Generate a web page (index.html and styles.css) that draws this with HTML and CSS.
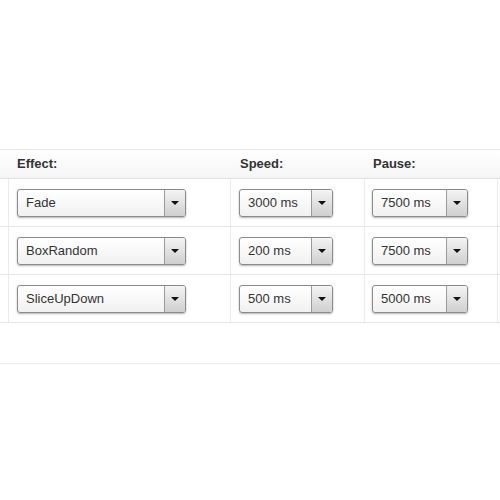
FILE: index.html
```html
<!DOCTYPE html>
<html>
<head>
<meta charset="utf-8">
<link rel="stylesheet" href="styles.css">
</head>
<body>
<div class="table">
  <div class="row head">
    <div class="cell"></div>
    <div class="cell"><span class="hd hd-effect">Effect:</span></div>
    <div class="cell"><span class="hd">Speed:</span></div>
    <div class="cell"><span class="hd">Pause:</span></div>
    <div class="cell"></div>
  </div>
  <div class="row">
    <div class="cell"></div>
    <div class="cell"><div class="sel sel-effect"><span class="val">Fade</span><span class="btn"><i class="tri"></i></span></div></div>
    <div class="cell"><div class="sel sel-speed"><span class="val">3000 ms</span><span class="btn"><i class="tri"></i></span></div></div>
    <div class="cell"><div class="sel sel-pause"><span class="val">7500 ms</span><span class="btn"><i class="tri"></i></span></div></div>
    <div class="cell"></div>
  </div>
  <div class="row">
    <div class="cell"></div>
    <div class="cell"><div class="sel sel-effect"><span class="val">BoxRandom</span><span class="btn"><i class="tri"></i></span></div></div>
    <div class="cell"><div class="sel sel-speed"><span class="val">200 ms</span><span class="btn"><i class="tri"></i></span></div></div>
    <div class="cell"><div class="sel sel-pause"><span class="val">7500 ms</span><span class="btn"><i class="tri"></i></span></div></div>
    <div class="cell"></div>
  </div>
  <div class="row">
    <div class="cell"></div>
    <div class="cell"><div class="sel sel-effect"><span class="val">SliceUpDown</span><span class="btn"><i class="tri"></i></span></div></div>
    <div class="cell"><div class="sel sel-speed"><span class="val">500 ms</span><span class="btn"><i class="tri"></i></span></div></div>
    <div class="cell"><div class="sel sel-pause"><span class="val">5000 ms</span><span class="btn"><i class="tri"></i></span></div></div>
    <div class="cell"></div>
  </div>
  <div class="footer"></div>
</div>
</body>
</html>
```
FILE: styles.css
```css
html, body {
  margin: 0;
  padding: 0;
  background: #ffffff;
}
body {
  width: 500px;
  height: 500px;
  overflow: hidden;
  font-family: "Liberation Sans", Arial, sans-serif;
  font-size: 13px;
  color: #333333;
}
.table {
  padding-top: 149px;
}
.row {
  display: grid;
  grid-template-columns: 8px 222px 134px 133px 3px;
  height: 47px;
  border-bottom: 1px solid #e6e6e6;
}
.row.head {
  height: 28px;
  border-top: 1px solid #e8e8e8;
  border-bottom: 1px solid #e2e2e2;
  background: linear-gradient(#ffffff, #f5f5f5);
}
.cell {
  display: flex;
  align-items: center;
  padding-left: 8px;
  border-left: 1px solid #ebebeb;
}
.cell:first-child {
  border-left: none;
  padding-left: 0;
}
.row.head .cell {
  border-left: none;
  padding-left: 9px;
  align-items: flex-start;
  padding-top: 6px;
}
.row.head .cell:first-child {
  padding-left: 0;
}
.hd {
  font-weight: bold;
  font-size: 13px;
  color: #333333;
}
.row.head .cell:nth-child(3) .hd { margin-left: 1px; }
.sel {
  display: flex;
  border: 1px solid #8a8a8a;
  border-radius: 3px;
  background: linear-gradient(#ffffff, #f1f1f1);
  box-shadow: 0 1px 2px rgba(0, 0, 0, 0.3);
  box-sizing: border-box;
  height: 28px;
  overflow: hidden;
}
.sel-effect { width: 169px; }
.sel-speed { width: 94px; }
.sel-pause { width: 96px; margin-left: -1px; }
.val {
  flex: 1;
  display: flex;
  align-items: center;
  padding-left: 8px;
  color: #333333;
  font-size: 13px;
}
.btn {
  width: 20px;
  border-left: 1px solid #9a9a9a;
  background: linear-gradient(#f4f4f4, #cfcfcf);
  display: flex;
  align-items: center;
  justify-content: center;
}
.tri {
  width: 0;
  height: 0;
  border-left: 4px solid transparent;
  border-right: 4px solid transparent;
  border-top: 4px solid #111111;
  margin-top: 1px;
}
.footer {
  height: 40px;
  border-bottom: 1px solid #ececec;
}
```
